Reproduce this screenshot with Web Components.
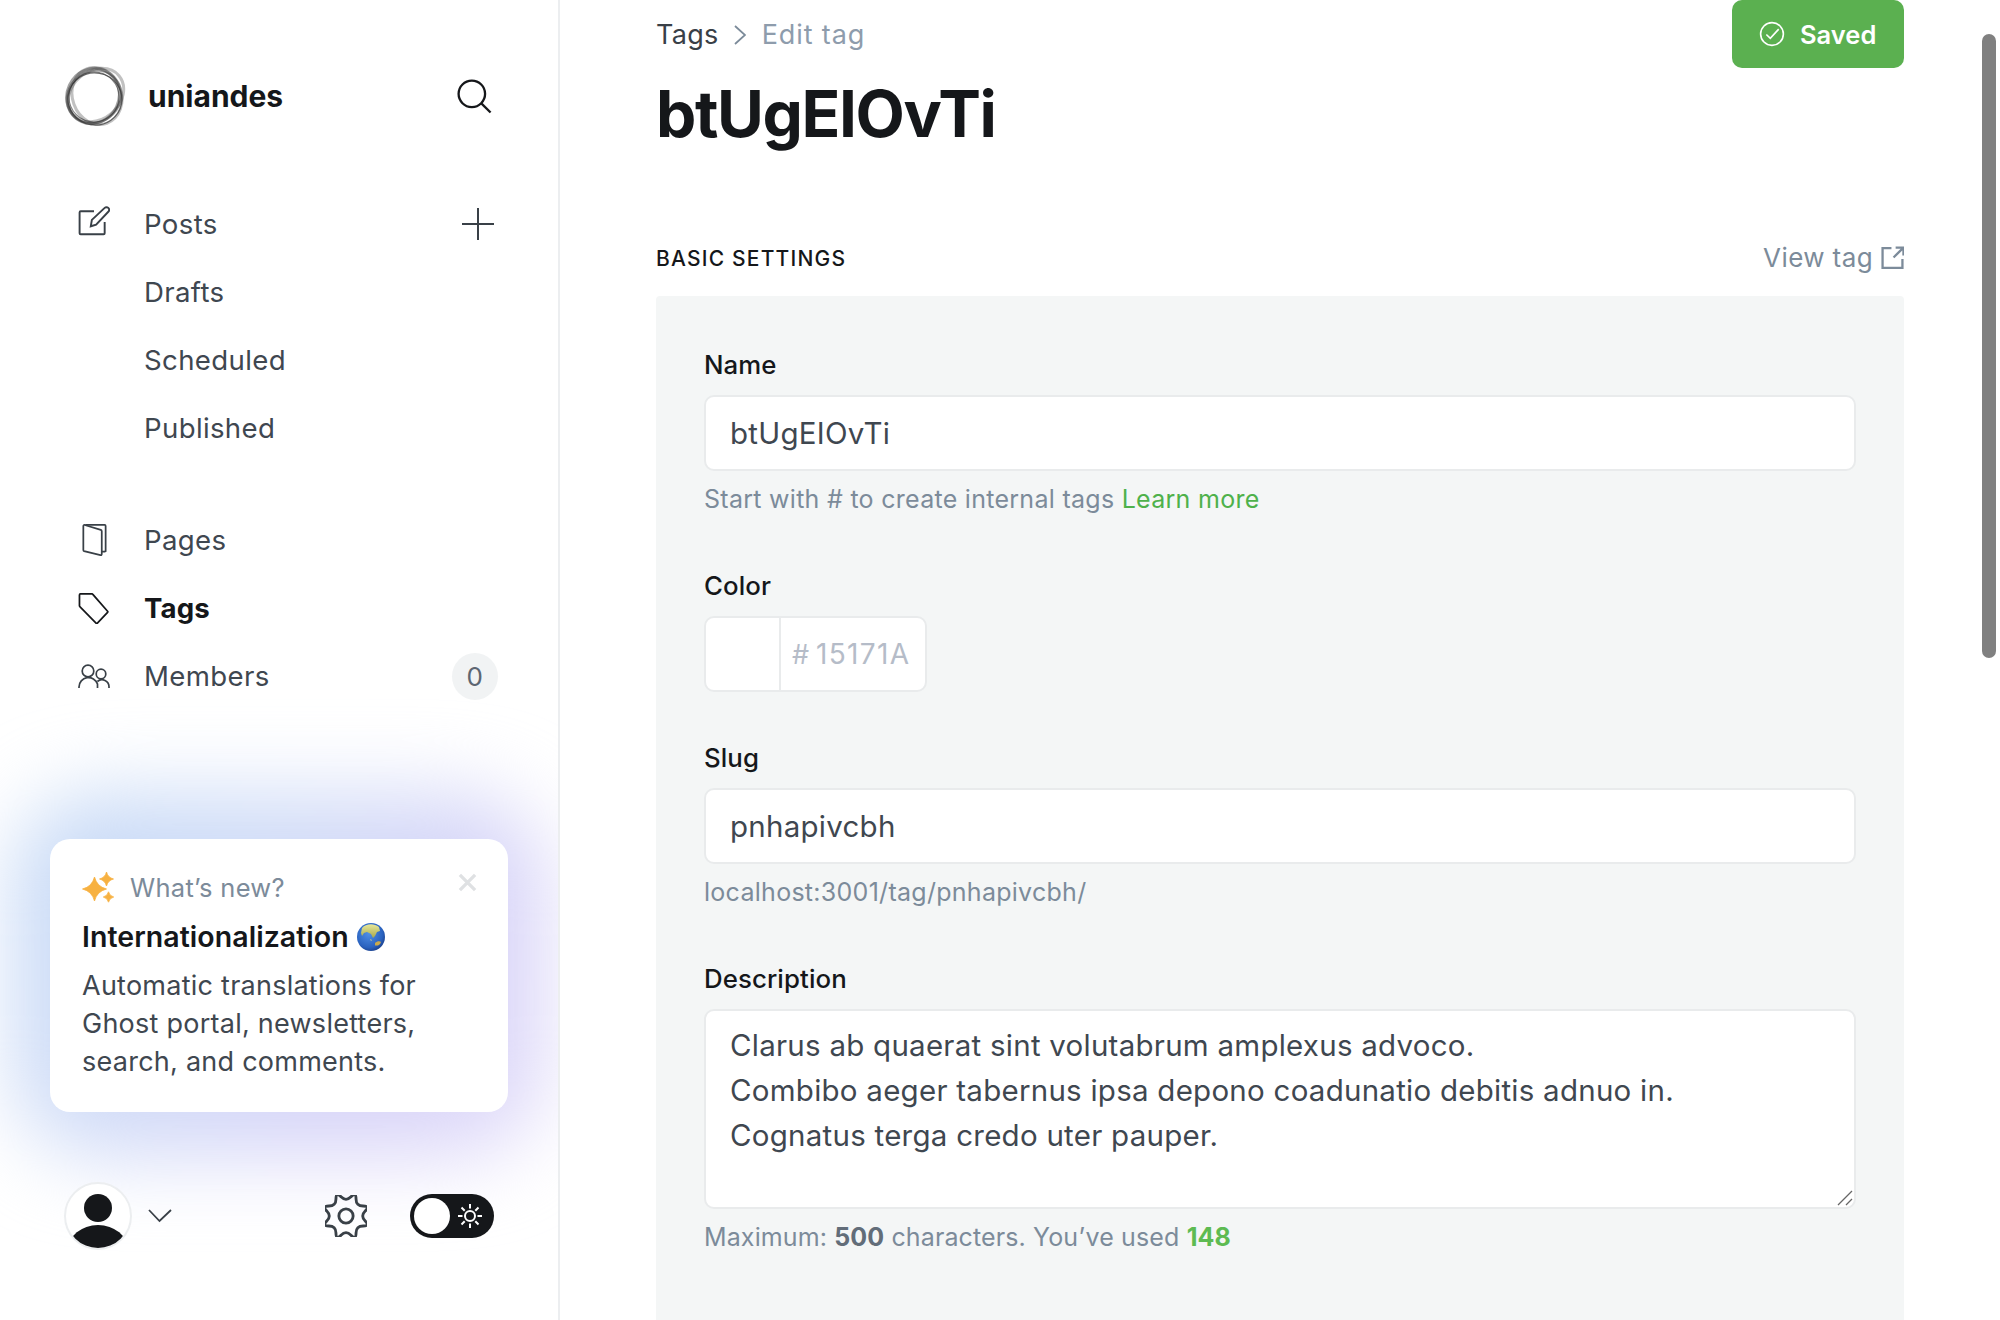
<!DOCTYPE html>
<html lang="en">
<head>
<meta charset="utf-8">
<title>Edit tag</title>
<style>
  html, body { margin: 0; height: 100%; overflow: hidden; background: #fff; }
  body { font-family: Inter, "Noto Sans", sans-serif; color: #15171a; }
</style>
</head>
<body>
<tag-app>
  <app-sidebar slot="side"></app-sidebar>
  <tag-editor slot="main"></tag-editor>
</tag-app>

<script>
// 8 tooth cog outline, notch on top
function cogPath(cx, cy, outer, inner) {
  const pts = [];
  for (let i = 0; i < 16; i++) {
    const a = (i * 22.5 - 90) * Math.PI / 180;
    const r = i % 2 ? outer : inner;
    pts.push([cx + r * Math.cos(a), cy + r * Math.sin(a)]);
  }
  const mid = (p, q) => [(p[0] + q[0]) / 2, (p[1] + q[1]) / 2].map(n => n.toFixed(2)).join(' ');
  let d = 'M' + mid(pts[15], pts[0]);
  pts.forEach((p, i) => { d += `Q${p[0].toFixed(2)} ${p[1].toFixed(2)} ${mid(p, pts[(i + 1) % 16])}`; });
  return d + 'z';
}

const ICONS = {
  search: '<circle cx="11" cy="11" r="9.2"/><path d="M17.6 17.6 24 24"/>',
  plus: '<path d="M17 1v32M1 17h32"/>',
  posts: '<path d="M15 5H2.5a1 1 0 0 0-1 1v19.5a1 1 0 0 0 1 1H24a1 1 0 0 0 1-1V15"/><path d="M12 19l1-6L25 1.8a2.4 2.4 0 0 1 3.4 0 2.6 2.6 0 0 1 0 3.6L17 17.5z"/>',
  pages: '<path d="M4 1h20a1 1 0 0 1 1 1v26l-1 .6h-3"/><path d="M2 2c0-.8.6-1.2 1.4-1L20 6a1.5 1.5 0 0 1 1 1.4V31c0 1-.6 1.4-1.4 1.1L2.800 28a1.300 1.300 0 0 1-.8-1.200z"/>',
  tag: '<path d="M2 1h12a1 1 0 0 1 .8.4L30 18.800a1 1 0 0 1 0 1.300L19.500 31a1 1 0 0 1-1.400 0L1.400 14a1 1 0 0 1-.4-.8V2a1 1 0 0 1 1-1z"/>',
  members: '<circle cx="10" cy="8" r="5.800"/><circle cx="23" cy="11" r="4.800"/><path d="M1 25v-1a9.500 9.500 0 0 1 18.500-3V25"/><path d="M19.400 18.500A7 7 0 0 1 31 24v1"/>',
  close: '<path d="M2 2l16 16M18 2 2 18"/>',
  chevron: '<path d="M1 1l10.500 11L23 1"/>',
  gear: `<path d="${cogPath(20, 20, 25, 13.5)}"/><circle cx="20" cy="20" r="6.800"/>`,
  sun: '<circle cx="12" cy="12" r="5"/><path d="M12 0v4.500M12 19.500V24M0 12h4.500M19.500 12H24M3.500 3.500l3.200 3.200M17.300 17.300l3.200 3.200M3.500 20.500l3.200-3.200M17.300 6.700l3.200-3.200"/>',
  check: '<circle cx="12" cy="12" r="10.500"/><path d="M6.800 12.500l3.600 3.500 7.800-8.500"/>',
  external: '<path d="M10 2H1.500v19h19v-8.500"/><path d="M12 11 21 2M14 1.500h7.500V9" />'
};

function icon(name, w, h, vb, extra) {
  return `<svg width="${w}" height="${h}" viewBox="${vb}" fill="none" stroke="currentColor" ${extra || ''} aria-hidden="true">${ICONS[name]}</svg>`;
}

function star(cx, cy, r) {
  const k = r * .2;
  return `<path d="M${cx} ${cy - r}Q${cx + k} ${cy - k} ${cx + r} ${cy}Q${cx + k} ${cy + k} ${cx} ${cy + r}Q${cx - k} ${cy + k} ${cx - r} ${cy}Q${cx - k} ${cy - k} ${cx} ${cy - r}z"/>`;
}

class TagApp extends HTMLElement {
  constructor() {
    super();
    this.attachShadow({ mode: 'open' });
    this.shadowRoot.innerHTML = `
      <style>
        :host { display: flex; width: 2000px; height: 1320px; overflow: hidden; position: relative; }
        ::slotted([slot="side"]) { flex: 0 0 558px; }
        ::slotted([slot="main"]) { flex: 1 1 auto; }
        .thumb { position: absolute; left: 1982px; top: 34px; width: 14px; height: 624px; border-radius: 7px; background: #808080; }
      </style>
      <slot name="side"></slot>
      <slot name="main"></slot>
      <div class="thumb"></div>
    `;
  }
}

class AppLogo extends HTMLElement {
  constructor() {
    super();
    this.attachShadow({ mode: 'open' });
    this.shadowRoot.innerHTML = `
      <style>:host { display: block; width: 62px; height: 60px; }</style>
      <svg width="62" height="60" viewBox="0 0 62 60" fill="none" stroke="#333">
        <ellipse cx="32" cy="29" rx="30" ry="24" stroke-width="3" stroke-opacity=".3" transform="rotate(-40 32 29)"/>
        <ellipse cx="33" cy="30" rx="29" ry="24.500" stroke-width="3" stroke-opacity=".3" transform="rotate(70 33 30)"/>
        <ellipse cx="29" cy="30" rx="28" ry="26" stroke-width="3" stroke-opacity=".45" transform="rotate(-65 29 30)"/>
        <ellipse cx="30" cy="31" rx="28" ry="25.500" stroke-width="2" stroke-opacity=".45" transform="rotate(-35 30 31)"/>
        <ellipse cx="31" cy="33" rx="27" ry="26" stroke-width="1.300" stroke-opacity=".7" transform="rotate(10 31 33)"/>
        <circle cx="30" cy="31" r="25" stroke-width="1.100" stroke-opacity=".6"/>
      </svg>`;
  }
}

class NavItem extends HTMLElement {
  constructor() {
    super();
    this.attachShadow({ mode: 'open' });
    this.shadowRoot.innerHTML = `
      <style>
        :host { display: flex; align-items: center; height: 68px; font-size: 27.600px; letter-spacing: .35px; color: #3f4750; }
        :host([active]) { font-weight: 700; color: #15171a; letter-spacing: .15px; }
        .ic { flex: 0 0 66px; margin-left: 12px; display: flex; align-items: center; color: #394047; }
        :host([active]) .ic { color: #15171a; }
        .label { flex: 1; }
        .end { display: flex; align-items: center; }
        ::slotted([slot="icon"]) { display: flex; }
      </style>
      <span class="ic"><slot name="icon"></slot></span>
      <span class="label"><slot></slot></span>
      <span class="end"><slot name="end"></slot></span>`;
  }
}

class WhatsNew extends HTMLElement {
  constructor() {
    super();
    this.attachShadow({ mode: 'open' });
    this.shadowRoot.innerHTML = `
      <style>
        :host { display: block; position: relative; }
        .glow { position: absolute; left: 12px; right: 12px; top: -45px; bottom: -45px; filter: blur(40px);
          background: linear-gradient(125deg, #c4d9f6 0%, #cfdcf7 35%, #d8d4f8 70%, #e0daf9 100%); border-radius: 90px; }
        .card { position: relative; box-sizing: border-box; height: 273px; margin: 0 50px; padding: 30px 32px 0; background: #fff; border-radius: 20px; }
        .head { display: flex; align-items: center; height: 36px; color: #7c8b9a; font-size: 25.500px; letter-spacing: .3px; }
        .head svg { margin-right: 16px; }
        .close { position: absolute; right: 31px; top: 34px; color: #dfe1e3; display: flex; }
        h3 { margin: 12px 0 0; display: flex; align-items: center; font-size: 28.500px; line-height: 40px; font-weight: 600; letter-spacing: .05px; }
        h3 svg { margin-left: 8px; }
        p { margin: 10px 0 0; font-size: 27px; line-height: 38px; letter-spacing: .25px; color: #3f4750; }
      </style>
      <div class="glow"></div>
      <div class="card">
        <div class="head">
          <svg width="32" height="32" viewBox="0 0 32 32" fill="#f7b141" stroke="#f7b141" stroke-width=".8" stroke-linejoin="round">
            ${star(12.500, 18, 12)}${star(24.500, 8, 7)}${star(26.500, 26, 5.200)}
          </svg>
          <span>What’s new?</span>
        </div>
        <span class="close">${icon('close', 19, 19, '0 0 20 20', 'stroke-width="3.500"')}</span>
        <h3>Internationalization
          <svg width="28" height="28" viewBox="0 0 28 28" aria-hidden="true">
            <defs>
              <radialGradient id="sea" cx=".42" cy=".38" r=".7"><stop offset="0" stop-color="#4f8fe6"/><stop offset=".7" stop-color="#2a62bf"/><stop offset="1" stop-color="#16377f"/></radialGradient>
              <linearGradient id="land" x1="0" y1="0" x2="0" y2="1"><stop offset="0" stop-color="#e7e89a"/><stop offset="1" stop-color="#a8a84a"/></linearGradient>
            </defs>
            <circle cx="14" cy="14" r="14" fill="url(#sea)"/>
            <path d="M5 5c4-4.500 12-5 17-1l1 4-3 1-2 4-2 2-2-4-4-2-3 1-2 3-1-3z" fill="url(#land)"/>
            <path d="M18 20c2-2 5-2 6-1-1 3-3 4-6 3.500z" fill="#c9a94c"/>
            <path d="M13 16l2 1-1 1z" fill="#d8d488"/>
          </svg>
        </h3>
        <p>Automatic translations for<br>Ghost portal, newsletters,<br>search, and comments.</p>
      </div>`;
  }
}

class UserBar extends HTMLElement {
  constructor() {
    super();
    this.attachShadow({ mode: 'open' });
    this.shadowRoot.innerHTML = `
      <style>
        :host { display: flex; align-items: center; height: 68px; padding-left: 64px; position: relative; }
        .avatar { box-sizing: border-box; width: 68px; height: 68px; border-radius: 50%; border: 2px solid #eceef0; background: #fff; overflow: hidden; }
        .avatar svg { display: block; }
        .chev { margin-left: 16px; color: #394047; display: flex; }
        .gear { margin-left: 154px; color: #394047; display: flex; }
        .toggle { margin: 0 0 0 44px; box-sizing: border-box; width: 84px; height: 44px; padding: 4px 12px 4px 4px; border-radius: 22px; background: #15171a; display: flex; align-items: center; justify-content: space-between; color: #fff; }
        .knob { width: 36px; height: 36px; border-radius: 50%; background: #fff; }
      </style>
      <div class="avatar">
        <svg width="64" height="64" viewBox="0 0 64 64"><circle cx="32" cy="24" r="14" fill="#15171a"/><ellipse cx="32" cy="66" rx="30" ry="25" fill="#15171a"/></svg>
      </div>
      <span class="chev">${icon('chevron', 24, 14, '0 0 24 14', 'stroke-width="1.800"')}</span>
      <span class="gear">${icon('gear', 42, 42, '0 0 40 40', 'stroke-width="2.700" style="margin:-1px"')}</span>
      <div class="toggle"><span class="knob"></span>${icon('sun', 24, 24, '0 0 24 24', 'stroke-width="2"')}</div>`;
  }
}

class AppSidebar extends HTMLElement {
  constructor() {
    super();
    this.attachShadow({ mode: 'open' });
    this.shadowRoot.innerHTML = `
      <style>
        :host { display: flex; flex-direction: column; box-sizing: content-box; border-right: 2px solid #eceef0; font-family: Inter, sans-serif; height: 1320px; overflow: hidden; position: relative; background: #fff; }
        header { display: flex; align-items: center; margin: 66px 0 0 64px; height: 60px; padding-right: 66px; }
        .brand { flex: 1; margin-left: 22px; font-size: 30px; font-weight: 700; color: #15171a; }
        .search { display: flex; color: #15171a; }
        nav { margin: 0 0 0 66px; padding-right: 64px; }
        nav.first { margin-top: 64px; }
        nav.second { margin-top: 44px; }
        .count { width: 46px; height: 47px; border-radius: 50%; background: #f1f3f4; display: flex; align-items: center; justify-content: center; color: #5d6672; font-size: 26px; margin-right: -4px; }
        .plus { display: flex; color: #394047; margin-right: -1px; }
        .posts-ic svg { margin-top: -4px; }
        .pages-ic svg { margin-left: 3px; }
        app-whats-new { margin-top: 129px; }
        app-user-bar { margin-top: 70px; }
      </style>
      <header>
        <app-logo></app-logo>
        <span class="brand">uniandes</span>
        <span class="search">${icon('search', 36, 36, '0 0 25 25', 'stroke-width="1.600"')}</span>
      </header>
      <nav class="first">
        <nav-item><span slot="icon" class="posts-ic">${icon('posts', 32, 32, '0 0 30 30', 'stroke-width="1.800"')}</span>Posts<span slot="end" class="plus">${icon('plus', 34, 34, '0 0 34 34', 'stroke-width="2"')}</span></nav-item>
        <nav-item>Drafts</nav-item>
        <nav-item>Scheduled</nav-item>
        <nav-item>Published</nav-item>
      </nav>
      <nav class="second">
        <nav-item><span slot="icon" class="pages-ic">${icon('pages', 26, 32, '0 0 26 33', 'stroke-width="1.800"')}</span>Pages</nav-item>
        <nav-item active><span slot="icon">${icon('tag', 32, 31, '0 0 32 32', 'stroke-width="1.800"')}</span>Tags</nav-item>
        <nav-item><span slot="icon">${icon('members', 32, 26, '0 0 32 26', 'stroke-width="1.700"')}</span>Members<span slot="end" class="count">0</span></nav-item>
      </nav>
      <app-whats-new></app-whats-new>
      <app-user-bar></app-user-bar>`;
  }
}

class FormField extends HTMLElement {
  constructor() {
    super();
    this.attachShadow({ mode: 'open' });
    this.shadowRoot.innerHTML = `
      <style>
        :host { display: block; }
        .label { font-size: 25.800px; font-weight: 500; line-height: 30px; color: #15171a; margin-bottom: 15px; letter-spacing: .1px; }
        .hint { font-size: 25px; line-height: 33px; margin-top: 12px; padding-bottom: 3px; color: #7c8b9a; letter-spacing: .28px; }
      </style>
      <div class="label"><slot name="label"></slot></div>
      <slot></slot>
      ${this.hasAttribute('bare') ? '' : '<div class="hint"><slot name="hint"></slot></div>'}`;
  }
}

class TextBox extends HTMLElement {
  constructor() {
    super();
    this.attachShadow({ mode: 'open' });
    this.shadowRoot.innerHTML = `
      <style>
        :host { display: block; box-sizing: border-box; height: 76px; background: #fff; border: 2px solid #e9ebec; border-radius: 10px; padding: 0 24px; font-size: 29.500px; line-height: 72px; letter-spacing: .25px; color: #3f4750; position: relative; }
        :host([multi]) { height: 200px; padding-top: 12px; line-height: 45px; }
        .grip { position: absolute; right: 1px; bottom: 1px; width: 16px; height: 16px; }
      </style>
      <slot></slot>
      ${this.hasAttribute('multi') ? '<svg class="grip" viewBox="0 0 16 16" stroke="#666" stroke-width="1.300"><path d="M1 15 15 1M9 15l6-6"/></svg>' : ''}`;
  }
}

class ColorBox extends HTMLElement {
  constructor() {
    super();
    this.attachShadow({ mode: 'open' });
    this.shadowRoot.innerHTML = `
      <style>
        :host { display: flex; box-sizing: border-box; width: 223px; height: 76px; margin-bottom: -1px; background: #fff; border: 2px solid #e9ebec; border-radius: 10px; align-items: stretch; }
        .swatch { width: 73px; border-right: 2px solid #e9ebec; }
        .val { flex: 1; display: flex; align-items: center; padding-left: 11px; font-size: 28px; letter-spacing: 1.300px; color: #b5bcc8; }
        .hash { margin-right: 7px; font-size: 27px; letter-spacing: 0; }
      </style>
      <div class="swatch"></div>
      <div class="val"><span class="hash">#</span><slot></slot></div>`;
  }
}

class TagEditor extends HTMLElement {
  constructor() {
    super();
    this.attachShadow({ mode: 'open' });
    this.shadowRoot.innerHTML = `
      <style>
        :host { display: block; box-sizing: border-box; height: 1320px; padding: 0 96px 0 96px; overflow: hidden; font-family: Inter, sans-serif; }
        .top { display: flex; justify-content: space-between; align-items: flex-start; height: 68px; }
        .crumbs { display: flex; align-items: center; height: 68px; font-size: 27px; letter-spacing: .3px; color: #394047; }
        .crumbs svg { margin: 2px 16px 0 15px; color: #7c8b9a; }
        .crumbs .now { color: #8e9cac; letter-spacing: .9px; }
        .saved { display: flex; align-items: center; box-sizing: border-box; width: 172px; height: 68px; padding-left: 27px; background: #5bb050; color: #fff; border-radius: 10px; font-size: 25.500px; font-weight: 600; }
        .saved svg { margin-right: 15px; }
        h1 { margin: 0; font-size: 64px; line-height: 80px; font-weight: 700; letter-spacing: -1.400px; color: #15171a; margin-top: 6px; }
        .section { display: flex; justify-content: space-between; align-items: center; margin-top: 84px; height: 40px; }
        h2 { margin: 0; font-size: 21px; font-weight: 500; letter-spacing: 1.200px; color: #15171a; }
        .view { display: flex; align-items: center; font-size: 26px; letter-spacing: .4px; color: #7c8b9a; margin-top: -2px; }
        .view svg { margin-left: 8px; }
        .panel { margin-top: 18px; padding: 54px 48px 200px; background: #f4f6f6; border-radius: 4px; display: flex; flex-direction: column; gap: 52px; }
        a { color: #4eb14b; text-decoration: none; }
        b { font-weight: 700; color: #626d79; }
        b.used { color: #5dbb52; }
        .tight { letter-spacing: .12px; }
      </style>
      <div class="top">
        <div class="crumbs"><span>Tags</span>
          <svg width="12" height="20" viewBox="0 0 12 20" fill="none" stroke="currentColor" stroke-width="1.800"><path d="M1 1l10 9-10 9"/></svg>
          <span class="now">Edit tag</span></div>
        <div class="saved">${icon('check', 26, 26, '0 0 24 24', 'stroke-width="1.500"')}Saved</div>
      </div>
      <h1>btUgEIOvTi</h1>
      <div class="section"><h2>BASIC SETTINGS</h2>
        <span class="view">View tag${icon('external', 23, 23, '0 0 22 22', 'stroke-width="2.200"')}</span></div>
      <div class="panel">
        <form-field>
          <span slot="label">Name</span>
          <text-box>btUgEIOvTi</text-box>
          <span slot="hint">Start with # to create internal tags <a>Learn more</a></span>
        </form-field>
        <form-field bare>
          <span slot="label">Color</span>
          <color-box>15171A</color-box>
        </form-field>
        <form-field>
          <span slot="label">Slug</span>
          <text-box>pnhapivcbh</text-box>
          <span slot="hint">localhost:3001/tag/pnhapivcbh/</span>
        </form-field>
        <form-field>
          <span slot="label">Description</span>
          <text-box multi>Clarus ab quaerat sint volutabrum amplexus advoco.<br>Combibo aeger tabernus ipsa depono coadunatio debitis adnuo in.<br>Cognatus terga credo uter pauper.</text-box>
          <span slot="hint" class="tight">Maximum: <b>500</b> characters. You’ve used <b class="used">148</b></span>
        </form-field>
      </div>`;
  }
}

customElements.define('tag-app', TagApp);
customElements.define('app-logo', AppLogo);
customElements.define('nav-item', NavItem);
customElements.define('app-whats-new', WhatsNew);
customElements.define('app-user-bar', UserBar);
customElements.define('app-sidebar', AppSidebar);
customElements.define('form-field', FormField);
customElements.define('text-box', TextBox);
customElements.define('color-box', ColorBox);
customElements.define('tag-editor', TagEditor);
</script>
</body>
</html>
